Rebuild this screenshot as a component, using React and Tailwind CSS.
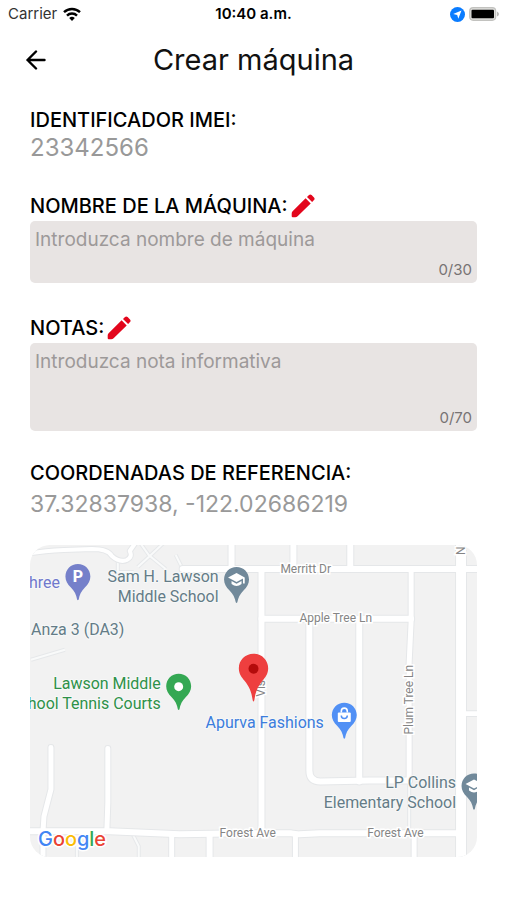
import { useState } from 'react';

const roads = [
    // Merritt Dr, Apple Tree Ln, Forest Ave
    { d: 'M153 24H450', width: 6 },
    { d: 'M232 74H382', width: 6 },
    { d: 'M-4 287L80 287L150 290L215 289L262 289L270 290L290 289H432', width: 6 },
    // Vertical streets
    { d: 'M202 -4V24', width: 6 },
    { d: 'M264 -4V24', width: 6 },
    { d: 'M321 -4V24', width: 6 },
    { d: 'M232 24V289', width: 6 },
    { d: 'M330 74V237', width: 6 },
    { d: 'M280 74V226Q280 237 291 237L340 236L380 236', width: 6 },
    { d: 'M382 24V76L380 118V236', width: 5 },
    { d: 'M432 -4V320', width: 10 },
    { d: 'M432 169H450', width: 5 },
    // Dead ends on the left
    { d: 'M21 203V245L14 272L13 287', width: 5 },
    { d: 'M78 204V258L77 287', width: 5 },
    // Below Forest Ave
    { d: 'M13 287V320', width: 5 },
    { d: 'M142 290V320', width: 5 },
    { d: 'M180 290V320', width: 6 },
    { d: 'M266 291V320', width: 5 },
    { d: 'M385 289V320', width: 5 },
    // School driveway
    { d: 'M-4 9Q12 6 34 5L62 4Q78 4 82 11Q90 18 97 15Q103 12 100 6L107 -4', width: 4 },
];

const paths = [
    'M109 -4L119 10L136 24M136 -4L119 12L108 22M88 16V27H104M1 115L35 105M153 24L146 10',
    'M47 290V320M103 290L109 302V320M380 239V289',
];

function Pin({ x, y, color, children }) {
    return (
        <g transform={`translate(${x} ${y})`}>
            <path
                d="M0 0C-7 0-12.500 5.500-12.500 12.500C-12.500 17-10.500 20-7 23.500C-3.500 27-1.500 31-.8 35.500Q0 37 .8 35.500C1.500 31 3.500 27 7 23.500C10.500 20 12.500 17 12.500 12.500C12.500 5.500 7 0 0 0Z"
                fill={color}
            />
            {children}
        </g>
    );
}

function SchoolGlyph() {
    return (
        <g>
            <path d="M0 6L-8.500 10.500L0 15L6.500 11.600V16.500H8.200V10.500Z" fill="#fff" />
            <path d="M-5 14V17Q0 21 5 17V14L0 16.800Z" fill="#fff" />
        </g>
    );
}

function MapView() {
    return (
        <svg
            viewBox="0 0 448 313"
            role="img"
            aria-label="Mapa"
            className="block w-full rounded-[20px] bg-[#f2f2f2] font-['Roboto',sans-serif]"
        >
            <g fill="none" stroke="#e6e8ea" strokeWidth="4">
                {paths.map((d) => <path key={d} d={d} />)}
            </g>
            <g fill="none" stroke="#f9fafa" strokeWidth="2">
                {paths.map((d) => <path key={d} d={d} />)}
            </g>
            <g fill="none" stroke="#e5e7e9" strokeLinecap="round" strokeLinejoin="round">
                {roads.map((road) => <path key={road.d} d={road.d} strokeWidth={road.width + 2} />)}
            </g>
            <g fill="none" stroke="#fff" strokeLinecap="round" strokeLinejoin="round">
                {roads.map((road) => <path key={road.d} d={road.d} strokeWidth={road.width} />)}
            </g>

            {/* Street names */}
            <g fill="#858585" stroke="#fff" strokeWidth="3" paintOrder="stroke" fontSize="12">
                <text x="251" y="28">Merritt Dr</text>
                <text x="270" y="77">Apple Tree Ln</text>
                <text x="190" y="293">Forest Ave</text>
                <text x="338" y="293">Forest Ave</text>
                <text transform="translate(384 190) rotate(-90)">Plum Tree Ln</text>
                <text transform="translate(236 152) rotate(-90)">Vis</text>
                <text transform="translate(436 10) rotate(-90)">N</text>
            </g>

            {/* Place names */}
            <g stroke="#f7f8f8" strokeWidth="2" paintOrder="stroke" fontSize="16">
                <text x="30" y="43" textAnchor="end" fill="#7078cc">hree</text>
                <g fill="#647c87">
                    <text x="189" y="37" textAnchor="end">Sam H. Lawson</text>
                    <text x="189" y="57" textAnchor="end">Middle School</text>
                    <text x="1" y="90">Anza 3 (DA3)</text>
                    <text x="427" y="244" textAnchor="end">LP Collins</text>
                    <text x="427" y="264" textAnchor="end">Elementary School</text>
                </g>
                <g fill="#2e9149" textAnchor="end">
                    <text x="131" y="144">Lawson Middle</text>
                    <text x="131" y="164">hool Tennis Courts</text>
                </g>
                <text x="176" y="183" fill="#3c7ddd">Apurva Fashions</text>
            </g>

            <Pin x="48" y="19" color="#7580ca">
                <text y="18" textAnchor="middle" fontSize="16" fontWeight="800" fill="#fff">P</text>
            </Pin>
            <Pin x="207" y="22" color="#71899a">
                <SchoolGlyph />
            </Pin>
            <Pin x="149" y="129" color="#34a853">
                <circle cy="13" r="4.500" fill="#fff" />
            </Pin>
            <Pin x="315" y="158" color="#5190f5">
                <rect x="-6.500" y="10" width="13" height="9.500" rx="1" fill="#fff" />
                <path d="M-3 10V8.500A3 3 0 0 1 3 8.500V10" fill="none" stroke="#fff" strokeWidth="1.600" />
                <path d="M-3 13A3 3 0 0 0 3 13" fill="none" stroke="#5190f5" strokeWidth="1.500" />
            </Pin>
            <Pin x="445" y="229" color="#71899a">
                <SchoolGlyph />
            </Pin>

            {/* Machine position */}
            <path
                d="M224 109C215.500 109 209.300 115.500 209.300 123.500C209.300 129 212 132.500 215 136C219.500 141.500 222 147 223.200 155.500Q224 158 224.800 155.500C226 147 228.500 141.500 233 136C236 132.500 238.700 129 238.700 123.500C238.700 115.500 232.500 109 224 109Z"
                fill="#ee3f3f"
            />
            <circle cx="224" cy="124" r="5" fill="#b40b0b" />

            <text x="8" y="302" fontSize="20" stroke="#fff" strokeWidth="3" paintOrder="stroke" className="font-['Inter',sans-serif] font-medium">
                <tspan fill="#4285f4">G</tspan>
                <tspan fill="#ea4335">o</tspan>
                <tspan fill="#fbbc05">o</tspan>
                <tspan fill="#4285f4">g</tspan>
                <tspan fill="#34a853">l</tspan>
                <tspan fill="#ea4335">e</tspan>
            </text>
        </svg>
    );
}

function StatusBar() {
    return (
        <div className="grid h-7 grid-cols-3 items-center px-2 text-[15px] text-black">
            <div className="flex items-center gap-1.5 text-[#333333]">
                <span>Carrier</span>
                <svg width="18" height="14" viewBox="0 0 18 14" fill="none" stroke="#000" strokeWidth="2.400">
                    <path d="M1 5.200A11.500 11.500 0 0 1 17 5.200" />
                    <path d="M4 8.600A7 7 0 0 1 14 8.600" />
                    <path d="M9 14L6.200 11.100A4 4 0 0 1 11.800 11.100Z" fill="#000" stroke="none" />
                </svg>
            </div>
            <span className="text-center font-semibold">10:40 a.m.</span>
            <div className="flex items-center justify-end gap-1">
                <svg width="15" height="15" viewBox="0 0 15 15">
                    <circle cx="7.500" cy="7.500" r="7.500" fill="#0a7cff" />
                    <path d="M11.500 3.500L8.300 11.800L7.200 7.900L3.200 6.900Z" fill="#fff" />
                </svg>
                <svg width="30" height="14" viewBox="0 0 30 14">
                    <rect x=".7" y=".7" width="26" height="12.600" rx="3.500" fill="#dededb" stroke="#c2c2bf" strokeWidth="1.200" />
                    <path d="M28 4.500Q30 5.500 30 7T28 9.500Z" fill="#b9b9b7" />
                    <rect x="2.500" y="2.800" width="22.500" height="8.400" rx="1" fill="#000" />
                </svg>
            </div>
        </div>
    );
}

function PencilIcon() {
    return (
        <svg width="24" height="24" viewBox="0 0 24 24" fill="#e3061c" className="shrink-0">
            <path d="M14.600 4.300L19.700 9.400L6.600 22.300Q5.600 23.300 4.200 23.300H1.800Q.7 23.300.7 22.200V19.400Q.7 18.200 1.600 17.300Z" />
            <path d="M16 2.900L18 1Q19.300-.2 20.600 1L23 3.400Q24.200 4.700 23 6L21.100 8Z" />
        </svg>
    );
}

function NoteField({ id, label, placeholder, max, boxClass }) {
    const [value, setValue] = useState('');

    return (
        <div className="flex flex-col gap-[3px]">
            <label htmlFor={id} className="flex items-center gap-[3px] text-xl leading-6 font-medium text-black">
                {label}
                <PencilIcon />
            </label>
            <div className={`flex flex-col rounded-[5px] bg-[#e8e4e3] px-[5px] pt-[5px] pb-[3px] ${boxClass}`}>
                <textarea
                    id={id}
                    value={value}
                    maxLength={max}
                    placeholder={placeholder}
                    onChange={(e) => setValue(e.target.value)}
                    className="min-h-0 w-full flex-1 resize-none overflow-hidden text-[19px] leading-7 text-black outline-none placeholder:text-[#9d9999]"
                />
                <span className="self-end text-[15px] leading-5 text-[#777373]">
                    {value.length}/{max}
                </span>
            </div>
        </div>
    );
}

export default function App() {
    return (
        <div className="min-h-screen bg-white font-['Inter',sans-serif]">
            <StatusBar />

            <header className="grid h-16 grid-cols-[48px_1fr_48px] items-center px-3">
                <button type="button" aria-label="Volver" className="flex justify-center">
                    <svg width="20" height="20" viewBox="0 0 20 20" fill="none" stroke="#000" strokeWidth="2.400" strokeLinecap="round" strokeLinejoin="round">
                        <path d="M10 1.500L1.500 10L10 18.500M1.500 10H18.500" />
                    </svg>
                </button>
                <h1 className="text-center text-[29px] leading-9 text-[#111111]">Crear máquina</h1>
            </header>

            <main className="flex flex-col gap-[30px] px-[30px] pt-4 pb-10">
                <section>
                    <h2 className="text-xl leading-6 font-medium text-black">IDENTIFICADOR IMEI:</h2>
                    <p className="text-2xl leading-8 text-[#999999]">23342566</p>
                </section>

                <form className="flex flex-col gap-[33px]">
                    <NoteField
                        id="nombre"
                        label="NOMBRE DE LA MÁQUINA:"
                        placeholder="Introduzca nombre de máquina"
                        max={30}
                        boxClass="h-[62px]"
                    />
                    <NoteField
                        id="notas"
                        label="NOTAS:"
                        placeholder="Introduzca nota informativa"
                        max={70}
                        boxClass="h-[88px]"
                    />
                </form>

                <section>
                    <h2 className="text-xl leading-6 font-medium text-black">COORDENADAS DE REFERENCIA:</h2>
                    <p className="mt-[3px] mb-[25px] text-[23px] leading-8 text-[#999999]">37.32837938, -122.02686219</p>
                    <MapView />
                </section>
            </main>
        </div>
    );
}
